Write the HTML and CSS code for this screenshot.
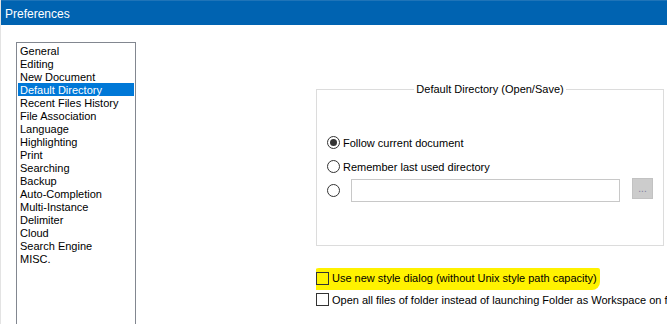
FILE: index.html
```html
<!DOCTYPE html>
<html lang="en">
<head>
  <meta charset="UTF-8">
  <title>Preferences</title>
  <link rel="stylesheet" href="styles.css">
</head>
<body>
  <div class="window">
    <div class="titlebar">Preferences</div>
    <div class="content">
      <ul class="categories">
        <li>General</li>
        <li>Editing</li>
        <li>New Document</li>
        <li class="selected">Default Directory</li>
        <li>Recent Files History</li>
        <li>File Association</li>
        <li>Language</li>
        <li>Highlighting</li>
        <li>Print</li>
        <li>Searching</li>
        <li>Backup</li>
        <li>Auto-Completion</li>
        <li>Multi-Instance</li>
        <li>Delimiter</li>
        <li>Cloud</li>
        <li>Search Engine</li>
        <li>MISC.</li>
      </ul>

      <div class="panel">
        <fieldset class="group">
          <legend>Default Directory (Open/Save)</legend>
          <label class="option">
            <span class="radio checked"></span>
            <span>Follow current document</span>
          </label>
          <label class="option">
            <span class="radio"></span>
            <span>Remember last used directory</span>
          </label>
          <div class="option custom">
            <span class="radio"></span>
            <span class="path-input"></span>
            <span class="browse">...</span>
          </div>
        </fieldset>

        <label class="check first">
          <span class="highlight">
            <span class="box"></span>
            <span>Use new style dialog (without Unix style path capacity)</span>
          </span>
        </label>
        <label class="check">
          <span class="box"></span>
          <span>Open all files of folder instead of launching Folder as Workspace on folder dropping</span>
        </label>
      </div>
    </div>
  </div>
</body>
</html>
```

FILE: styles.css
```css
html, body {
  margin: 0;
  padding: 0;
  background: #fff;
  overflow: hidden;
}
body {
  font-family: "Liberation Sans", Arial, sans-serif;
  font-size: 11px;
  color: #000;
  width: 667px;
  height: 324px;
}
.window {
  height: 324px;
  border-left: 1px solid #e3e3e3;
  box-sizing: border-box;
  overflow: hidden;
}
.titlebar {
  height: 25px;
  background-color: #0063b1;
  border-top: 1px solid #1f74b8;
  box-sizing: border-box;
  color: #fff;
  font-size: 12px;
  line-height: 22px;
  padding: 2px 0 0 4px;
}
.content {
  display: flex;
  padding-top: 17px;
  height: 299px;
  box-sizing: border-box;
}
.categories {
  list-style: none;
  margin: 0 0 0 15px;
  padding: 1px;
  width: 116px;
  height: 281px;
  border: 1px solid #828790;
  border-bottom: none;
  flex-shrink: 0;
}
.categories li {
  height: 13px;
  line-height: 14px;
  padding-left: 2px;
  white-space: nowrap;
}
.categories li.selected {
  background-color: #0078d7;
  color: #fff;
}
.panel {
  margin-left: 180px;
  flex: 1;
  min-width: 0;
  overflow: hidden;
}
.group {
  margin: 47px 0 0 0;
  width: 348px;
  height: 157px;
  box-sizing: border-box;
  border: 1px solid #dcdcdc;
  padding: 46px 0 0 10px;
  position: relative;
}
.group legend {
  position: absolute;
  top: -8px;
  left: 0;
  right: 0;
  margin: 0 auto;
  width: max-content;
  padding: 0 2px;
  background: #fff;
  line-height: 14px;
}
.option {
  display: flex;
  align-items: center;
  height: 13px;
  gap: 3px;
  margin-bottom: 11px;
  white-space: nowrap;
}
.radio {
  width: 11px;
  height: 11px;
  border: 1px solid #333;
  border-radius: 50%;
  flex-shrink: 0;
  display: flex;
  align-items: center;
  justify-content: center;
}
.radio.checked::after {
  content: "";
  width: 7px;
  height: 7px;
  border-radius: 50%;
  background: #333;
}
.option.custom {
  height: 23px;
  margin-top: -5px;
}
.path-input {
  width: 267px;
  height: 21px;
  border: 1px solid #c8c8c8;
  margin-left: 8px;
}
.browse {
  width: 21px;
  height: 21px;
  background: #cccccc;
  border: 1px solid #c2c2c2;
  box-sizing: border-box;
  color: #8080a0;
  font-size: 10px;
  text-align: center;
  line-height: 19px;
  margin-left: 9px;
  align-self: flex-start;
  margin-top: -1px;
}
.check {
  display: flex;
  align-items: center;
  gap: 3px;
  height: 21px;
  white-space: nowrap;
}
.check.first {
  margin-top: 22px;
}
.highlight {
  display: flex;
  align-items: center;
  gap: 3px;
  background: #fff200;
  margin-left: -3px;
  padding: 4px 3px 5px 3px;
  border-radius: 6px 2px 8px 2px;
}
.box {
  width: 11px;
  height: 11px;
  border: 1px solid #333;
  flex-shrink: 0;
}
```
